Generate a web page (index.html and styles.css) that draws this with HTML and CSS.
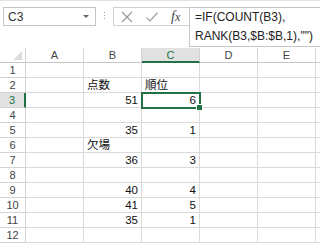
FILE: index.html
```html
<!DOCTYPE html>
<html lang="ja">
<head>
<meta charset="utf-8">
<link rel="stylesheet" href="styles.css">
</head>
<body>
<div class="app">
  <div class="fbar">
    <div class="namebox">
      <span class="nb-text">C3</span>
      <span class="nb-arrow"></span>
    </div>
    <div class="dots"></div>
    <div class="btns">
      <svg class="ico" width="14" height="14" viewBox="0 0 14 14"><path d="M2 2 L12 12 M12 2 L2 12" stroke="#9a9a9a" stroke-width="1.2" fill="none"/></svg>
      <svg class="ico" width="14" height="14" viewBox="0 0 14 14"><path d="M1.5 7.5 L5 11 L12.5 2.5" stroke="#a8a8a8" stroke-width="1.4" fill="none"/></svg>
      <span class="fx">f<i>x</i></span>
    </div>
    <div class="formula">=IF(COUNT(B3),<br>RANK(B3,$B:$B,1),"")</div>
  </div>
  <div class="sheet">
    <div class="hd corner"><span class="tri"></span></div>
    <div class="hd col">A</div>
    <div class="hd col">B</div>
    <div class="hd col sel">C</div>
    <div class="hd col">D</div>
    <div class="hd col">E</div>
    <div class="hd col last"></div>

    <div class="hd row">1</div><div class="c"></div><div class="c"></div><div class="c"></div><div class="c"></div><div class="c"></div><div class="c last"></div>
    <div class="hd row">2</div><div class="c"></div><div class="c">点数</div><div class="c">順位</div><div class="c"></div><div class="c"></div><div class="c last"></div>
    <div class="hd row sel">3</div><div class="c"></div><div class="c n">51</div><div class="c n active">6<span class="handle"></span></div><div class="c"></div><div class="c"></div><div class="c last"></div>
    <div class="hd row">4</div><div class="c"></div><div class="c"></div><div class="c"></div><div class="c"></div><div class="c"></div><div class="c last"></div>
    <div class="hd row">5</div><div class="c"></div><div class="c n">35</div><div class="c n">1</div><div class="c"></div><div class="c"></div><div class="c last"></div>
    <div class="hd row">6</div><div class="c"></div><div class="c">欠場</div><div class="c"></div><div class="c"></div><div class="c"></div><div class="c last"></div>
    <div class="hd row">7</div><div class="c"></div><div class="c n">36</div><div class="c n">3</div><div class="c"></div><div class="c"></div><div class="c last"></div>
    <div class="hd row">8</div><div class="c"></div><div class="c"></div><div class="c"></div><div class="c"></div><div class="c"></div><div class="c last"></div>
    <div class="hd row">9</div><div class="c"></div><div class="c n">40</div><div class="c n">4</div><div class="c"></div><div class="c"></div><div class="c last"></div>
    <div class="hd row">10</div><div class="c"></div><div class="c n">41</div><div class="c n">5</div><div class="c"></div><div class="c"></div><div class="c last"></div>
    <div class="hd row">11</div><div class="c"></div><div class="c n">35</div><div class="c n">1</div><div class="c"></div><div class="c"></div><div class="c last"></div>
    <div class="hd row">12</div><div class="c"></div><div class="c"></div><div class="c"></div><div class="c"></div><div class="c"></div><div class="c last"></div>
  </div>
</div>
</body>
</html>
```

FILE: styles.css
```css
html, body {
  margin: 0;
  padding: 0;
  background: #ffffff;
}
body {
  width: 320px;
  height: 246px;
  overflow: hidden;
  font-family: "Liberation Sans", "Noto Sans CJK JP", sans-serif;
  color: #222;
}
.app {
  width: 320px;
  height: 246px;
  overflow: hidden;
}
.fbar {
  height: 47px;
  border-top: 1px solid #e2e2e2;
  box-sizing: border-box;
  display: flex;
  align-items: flex-start;
  padding-top: 6px;
  padding-left: 3px;
}
.namebox {
  width: 93px;
  height: 19px;
  border: 1px solid #c6c6c6;
  box-sizing: border-box;
  display: flex;
  align-items: center;
  justify-content: space-between;
  padding: 0 6px 0 4px;
  font-size: 12px;
  color: #333;
}
.nb-arrow {
  width: 0;
  height: 0;
  border-left: 3px solid transparent;
  border-right: 3px solid transparent;
  border-top: 3px solid #666;
}
.dots {
  width: 1px;
  height: 9px;
  margin: 5px 8px 0 8px;
  background: repeating-linear-gradient(to bottom, #a0a0a0 0 1px, transparent 1px 3px);
}
.btns {
  width: 76px;
  height: 19px;
  border: 1px solid #d0d0d0;
  border-right: none;
  box-sizing: border-box;
  display: flex;
  align-items: center;
  padding-left: 6px;
  gap: 11px;
}
.fx {
  font-family: "Liberation Serif", serif;
  font-style: italic;
  font-size: 14px;
  color: #444;
  margin-left: 1px;
}
.fx i {
  font-size: 12px;
}
.formula {
  flex: 1;
  height: 40px;
  border: 1px solid #c6c6c6;
  border-right: none;
  box-sizing: border-box;
  padding: 0 0 0 5px;
  font-size: 12px;
  line-height: 19px;
  color: #222;
  white-space: nowrap;
}
.sheet {
  display: grid;
  grid-template-columns: 26px 58px 58px 58px 58px 58px 4px;
  grid-auto-rows: 15px;
  margin-top: 1px;
}
.hd {
  font-size: 11px;
  color: #444;
  display: flex;
  align-items: center;
  justify-content: center;
  box-sizing: border-box;
  border-right: 1px solid #d4d4d4;
  border-bottom: 1px solid #d4d4d4;
}
.corner {
  position: relative;
  border-bottom: 1px solid #c6c6c6;
}
.tri {
  position: absolute;
  right: 3px;
  bottom: 2px;
  width: 0;
  height: 0;
  border-left: 9px solid transparent;
  border-bottom: 9px solid #dcdcdc;
}
.hd.col {
  border-bottom: 1px solid #c6c6c6;
}
.hd.col.sel {
  background: #e1e1e1;
  color: #217346;
  border-bottom: 2px solid #217346;
}
.hd.row.sel {
  background: #e1e1e1;
  color: #217346;
  border-right: 2px solid #217346;
}
.hd.last {
  border-right: none;
}
.c {
  box-sizing: border-box;
  border-right: 1px solid #dadada;
  border-bottom: 1px solid #dadada;
  font-size: 11.5px;
  line-height: 14px;
  padding: 0 3px;
  color: #111;
  white-space: nowrap;
}
.c.last {
  border-right: none;
}
.c.n {
  text-align: right;
}
.c.active {
  position: relative;
  outline: 2px solid #217346;
  outline-offset: -1px;
  z-index: 2;
}
.handle {
  position: absolute;
  right: -4px;
  bottom: -4px;
  width: 5px;
  height: 5px;
  background: #217346;
  border: 1px solid #fff;
}
```
